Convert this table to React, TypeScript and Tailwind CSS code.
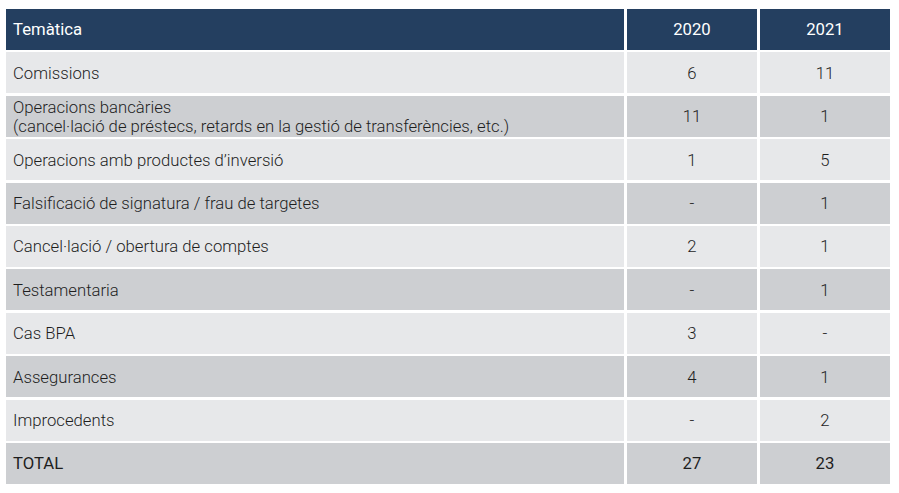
import React from "react";

const rows: { label: React.ReactNode; a: string; b: string; dark: boolean }[] = [
  { label: "Comissions", a: "6", b: "11", dark: false },
  {
    label: (
      <>
        Operacions bancàries
        <br />
        (cancel·lació de préstecs, retards en la gestió de transferències, etc.)
      </>
    ),
    a: "11",
    b: "1",
    dark: true,
  },
  { label: "Operacions amb productes d’inversió", a: "1", b: "5", dark: false },
  { label: "Falsificació de signatura / frau de targetes", a: "-", b: "1", dark: true },
  { label: "Cancel·lació / obertura de comptes", a: "2", b: "1", dark: false },
  { label: "Testamentaria", a: "-", b: "1", dark: true },
  { label: "Cas BPA", a: "3", b: "-", dark: false },
  { label: "Assegurances", a: "4", b: "1", dark: true },
  { label: "Improcedents", a: "-", b: "2", dark: false },
];

export default function App() {
  return (
    <div
      className="w-[899px] h-[493px] bg-white pt-[9px] pl-[6px] text-[16.7px] font-light text-[#1e1e1e]"
      style={{ fontFamily: "Roboto, 'Liberation Sans', sans-serif" }}
    >
      <div className="w-[884px] flex flex-col gap-[2.4px]">
        <div className="flex gap-[3px] h-[41px] text-white font-normal">
          <div className="w-[618px] bg-[#243f60] flex items-center pl-[7px] pt-[1px]">Temàtica</div>
          <div className="w-[130px] bg-[#243f60] flex items-center justify-center pt-[1px]">2020</div>
          <div className="w-[130px] bg-[#243f60] flex items-center justify-center pt-[1px]">2021</div>
        </div>
        {rows.map((r, i) => {
          const bg = r.dark ? "bg-[#cdcfd2]" : "bg-[#e7e8ea]";
          return (
            <div key={i} className="flex gap-[3px] h-[41px]">
              <div className={`w-[618px] ${bg} flex items-center pl-[7px] pt-[1px] leading-[19px]`}>
                <div>{r.label}</div>
              </div>
              <div className={`w-[130px] ${bg} flex items-center justify-center pt-[1px]`}>{r.a}</div>
              <div className={`w-[130px] ${bg} flex items-center justify-center pt-[1px]`}>{r.b}</div>
            </div>
          );
        })}
        <div className="flex gap-[3px] h-[41px] font-normal">
          <div className="w-[618px] bg-[#cdcfd2] flex items-center pl-[7px] pt-[1px]">TOTAL</div>
          <div className="w-[130px] bg-[#cdcfd2] flex items-center justify-center pt-[1px]">27</div>
          <div className="w-[130px] bg-[#cdcfd2] flex items-center justify-center pt-[1px]">23</div>
        </div>
      </div>
    </div>
  );
}
